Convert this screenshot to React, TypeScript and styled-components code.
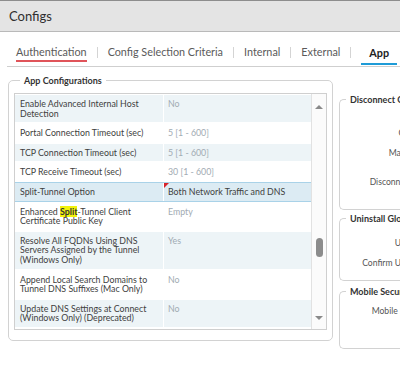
import styled, { createGlobalStyle } from "styled-components";

const GlobalStyle = createGlobalStyle`
  html, body {
    margin: 0;
    overflow: hidden;
    background: #fff;
  }
  body {
    width: 400px;
    height: 365px;
    font-family: Lato, "Open Sans", sans-serif;
    color: #333;
  }
`;

const Header = styled.div`
  height: 30px;
  border-top: 1px solid #8d8d8d;
  border-bottom: 1px solid #b9b9b9;
  background: #e4e4e4;
  padding-left: 9px;
  display: flex;
  align-items: center;
  font-size: 13px;
  color: #2f2f2f;
`;

const TabBar = styled.div`
  margin-left: 7px;
  height: 34px;
  border-bottom: 1px solid #cfcfcf;
  display: flex;
  align-items: flex-end;
  white-space: nowrap;
`;

const Tab = styled.div<{ $accent?: string; $active?: boolean }>`
  font-size: 10.8px;
  line-height: 1;
  color: ${(p) => (p.$active ? "#222" : "#5a5a5a")};
  font-weight: ${(p) => (p.$active ? 700 : 400)};
  padding: 3px ${(p) => (p.$active ? "8px" : "0")} 0;
  height: ${(p) => (p.$active ? 24 : 21)}px;
  margin-bottom: ${(p) => (p.$active ? 1 : 4)}px;
  display: flex;
  align-items: center;
  box-sizing: border-box;
  border-bottom: 2px solid ${(p) => p.$accent ?? "transparent"};
`;

const Sep = styled.span`
  margin: 0 10px 8px;
  height: 11px;
  border-left: 1px solid #d4d4d4;
`;

const Body = styled.div`
  display: flex;
  align-items: flex-start;
  gap: 6px;
  padding: 8px 0 0 8px;
`;

const Fieldset = styled.fieldset`
  margin: 0;
  border: 1px solid #d2d2d2;
  border-radius: 5px;
  min-width: 0;
  box-sizing: border-box;
`;

const MainSet = styled(Fieldset)`
  width: 325px;
  flex: none;
  padding: 7px 5px 10px;
`;

const Legend = styled.legend`
  font-size: 9px;
  line-height: 11px;
  font-weight: 700;
  color: #333;
  padding: 0 4px;
  margin-left: 6px;
  white-space: nowrap;
`;

const TableBox = styled.div`
  display: flex;
  border: 1px solid #cfcfcf;
  height: 235px;
  overflow: hidden;
`;

const Rows = styled.div`
  flex: 1;
  min-width: 0;
`;

const Row = styled.div<{ $alt?: boolean; $selected?: boolean }>`
  display: grid;
  grid-template-columns: 148px 1fr;
  background: ${(p) => (p.$selected ? "#dcebf3" : p.$alt ? "#edf4f7" : "#fff")};
  border-top: 1px solid ${(p) => (p.$selected ? "#a9d2e8" : "#fff")};
  border-bottom: 1px solid ${(p) => (p.$selected ? "#a9d2e8" : "#fff")};
  font-size: 8.8px;
  line-height: 9.6px;
`;

const Cell = styled.div<{ $value?: boolean; $dark?: boolean; $dirty?: boolean }>`
  position: relative;
  padding: ${(p) => (p.$value ? "4px 4px 4px 4px" : "4px 3px 4px 5px")};
  color: ${(p) => (p.$value && !p.$dark ? "#a1abb3" : "#404040")};
  border-left: ${(p) => (p.$value ? "1px solid #fff" : "none")};

  ${(p) =>
    p.$dirty
      ? `&::before {
    content: "";
    position: absolute;
    left: 0;
    top: 0;
    border-top: 5px solid #d8232a;
    border-right: 5px solid transparent;
  }`
      : ""}
`;

const Hit = styled.mark`
  background: #f2f20a;
  color: #333;
  font-weight: 700;
`;

const Scrollbar = styled.div`
  width: 15px;
  flex: none;
  border-left: 1px solid #e2e2e2;
  background: #fbfbfb;
  display: flex;
  flex-direction: column;
  align-items: center;
  padding: 11px 0 9px;
  box-sizing: border-box;
`;

const Arrow = styled.div<{ $down?: boolean }>`
  width: 0;
  height: 0;
  border-left: 4px solid transparent;
  border-right: 4px solid transparent;
  ${(p) =>
    p.$down ? "border-top: 4px solid #8a8a8a;" : "border-bottom: 4px solid #8a8a8a;"}
`;

const Track = styled.div`
  flex: 1;
  width: 100%;
  display: flex;
  justify-content: center;
  padding-top: 129px;
`;

const Thumb = styled.div`
  width: 7px;
  height: 19px;
  border-radius: 4px;
  background: #8c8c8c;
`;

const Side = styled.div`
  display: flex;
  flex-direction: column;
  padding-top: 19px;
  flex: none;
  width: 220px;
`;

const SideSet = styled(Fieldset)<{ $height: number; $pad: number; $gap: number }>`
  height: ${(p) => p.$height}px;
  padding: ${(p) => p.$pad}px 0 0;
  margin-bottom: ${(p) => p.$gap}px;
  border-radius: 5px 0 0 5px;
  border-right: none;
`;

const FieldRow = styled.div<{ $h?: number }>`
  display: flex;
  align-items: flex-start;
  height: ${(p) => p.$h ?? 20}px;
`;

const FieldLabel = styled.div`
  width: 115px;
  margin-left: 11px;
  flex: none;
  text-align: right;
  font-size: 8.6px;
  line-height: 9.6px;
  color: #555;
`;

const rows: { label: React.ReactNode; value: string }[] = [
  { label: "Enable Advanced Internal Host Detection", value: "No" },
  { label: "Portal Connection Timeout (sec)", value: "5 [1 - 600]" },
  { label: "TCP Connection Timeout (sec)", value: "5 [1 - 600]" },
  { label: "TCP Receive Timeout (sec)", value: "30 [1 - 600]" },
  { label: "Split-Tunnel Option", value: "Both Network Traffic and DNS" },
  {
    label: (
      <>
        Enhanced <Hit>Split</Hit>-Tunnel Client Certificate Public Key
      </>
    ),
    value: "Empty",
  },
  {
    label: "Resolve All FQDNs Using DNS Servers Assigned by the Tunnel (Windows Only)",
    value: "Yes",
  },
  { label: "Append Local Search Domains to Tunnel DNS Suffixes (Mac Only)", value: "No" },
  { label: "Update DNS Settings at Connect (Windows Only) (Deprecated)", value: "No" },
  { label: "Detect Proxy for Each Connection (Windows Only)", value: "Yes" },
];

const SELECTED = 4;

export default function App() {
  return (
    <>
      <GlobalStyle />
      <Header>Configs</Header>
      <TabBar>
        <Tab $accent="#e0545a" style={{ marginLeft: 9 }}>
          Authentication
        </Tab>
        <Sep />
        <Tab>Config Selection Criteria</Tab>
        <Sep />
        <Tab>Internal</Tab>
        <Sep />
        <Tab>External</Tab>
        <Sep />
        <Tab $active $accent="#1e9bd7">
          App
        </Tab>
        <Sep />
        <Tab>Satellite</Tab>
      </TabBar>
      <Body>
        <MainSet>
          <Legend>App Configurations</Legend>
          <TableBox>
            <Rows>
              {rows.map((r, i) => (
                <Row key={i} $alt={i % 2 === 0} $selected={i === SELECTED}>
                  <Cell>{r.label}</Cell>
                  <Cell $value $dark={i === SELECTED} $dirty={i === SELECTED}>
                    {r.value}
                  </Cell>
                </Row>
              ))}
            </Rows>
            <Scrollbar>
              <Arrow />
              <Track>
                <Thumb />
              </Track>
              <Arrow $down />
            </Scrollbar>
          </TableBox>
        </MainSet>
        <Side>
          <SideSet $height={116} $pad={4} $gap={3}>
            <Legend>Disconnect GlobalProtect App</Legend>
            <FieldRow>
              <FieldLabel>Passcode</FieldLabel>
            </FieldRow>
            <FieldRow>
              <FieldLabel>Confirm Passcode</FieldLabel>
            </FieldRow>
            <FieldRow $h={29}>
              <FieldLabel>Max Times User Can Disconnect</FieldLabel>
            </FieldRow>
            <FieldRow>
              <FieldLabel>Disconnect Timeout (min)</FieldLabel>
            </FieldRow>
          </SideSet>
          <SideSet $height={68} $pad={15} $gap={5}>
            <Legend>Uninstall GlobalProtect App</Legend>
            <FieldRow>
              <FieldLabel>Uninstall Password</FieldLabel>
            </FieldRow>
            <FieldRow>
              <FieldLabel>Confirm Uninstall Password</FieldLabel>
            </FieldRow>
          </SideSet>
          <SideSet $height={63} $pad={10} $gap={0}>
            <Legend>Mobile Security Manager Settings</Legend>
            <FieldRow>
              <FieldLabel>Mobile Security Manager</FieldLabel>
            </FieldRow>
            <FieldRow>
              <FieldLabel>Enrollment Port</FieldLabel>
            </FieldRow>
          </SideSet>
        </Side>
      </Body>
    </>
  );
}
